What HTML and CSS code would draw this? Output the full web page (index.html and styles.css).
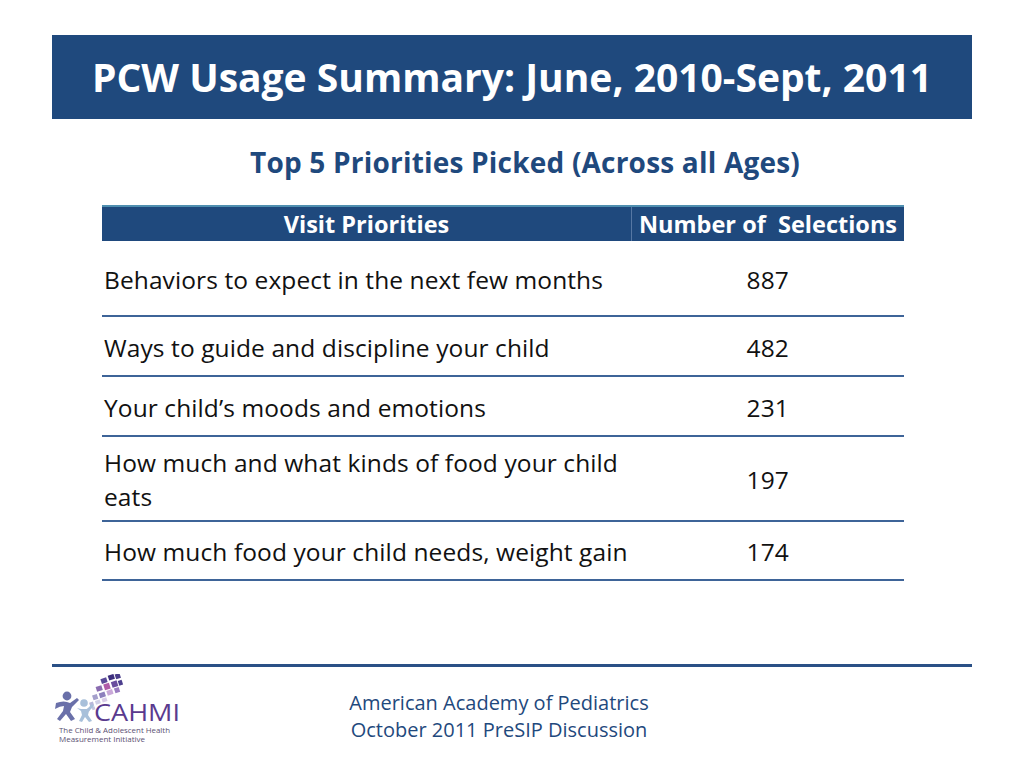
FILE: index.html
```html
<!DOCTYPE html>
<html>
<head>
<meta charset="utf-8">
<link rel="stylesheet" href="styles.css">
</head>
<body>
<div class="slide">
  <header class="title-bar">
    <h1 class="title">PCW Usage Summary: June, 2010-Sept, 2011</h1>
  </header>
  <h2 class="subtitle">Top 5 Priorities Picked (Across all Ages)</h2>
  <table class="data">
    <thead>
      <tr>
        <th class="c1">Visit Priorities</th>
        <th class="c2">Number of&nbsp; Selections</th>
      </tr>
    </thead>
    <tbody>
      <tr class="r1"><td class="c1">Behaviors to expect in the next few months</td><td class="c2">887</td></tr>
      <tr class="r2"><td class="c1">Ways to guide and discipline your child</td><td class="c2">482</td></tr>
      <tr class="r3"><td class="c1">Your child’s moods and emotions</td><td class="c2">231</td></tr>
      <tr class="r4"><td class="c1">How much and what kinds of food your child eats</td><td class="c2">197</td></tr>
      <tr class="r5"><td class="c1">How much food your child needs, weight gain</td><td class="c2">174</td></tr>
    </tbody>
  </table>
  <footer class="footer">
    <div class="logo">
      <svg width="132" height="72" viewBox="0 0 132 72">
        <g transform="rotate(-18 54 16)">
          <rect x="60" y="3" width="6" height="5" fill="#3d2f7e"/>
          <rect x="67" y="4" width="5" height="5" fill="#4a3d8a"/>
          <rect x="52" y="4" width="6" height="5" fill="#5a4a98"/>
          <rect x="45" y="10" width="6" height="5" fill="#8a6cb0"/>
          <rect x="53" y="10" width="6" height="6" fill="#b05ca8"/>
          <rect x="61" y="10" width="6" height="6" fill="#6a4e9e"/>
          <rect x="68" y="11" width="4" height="5" fill="#4d3f8e"/>
          <rect x="39" y="17" width="5" height="5" fill="#a5a0cc"/>
          <rect x="46" y="17" width="6" height="5" fill="#8d80bd"/>
          <rect x="54" y="17" width="6" height="5" fill="#c9a8d8"/>
          <rect x="62" y="17" width="5" height="5" fill="#9a7cc0"/>
          <rect x="34" y="23" width="4" height="4" fill="#b8b8da"/>
          <rect x="40" y="23" width="5" height="4" fill="#cfcfe6"/>
          <rect x="47" y="23" width="5" height="4" fill="#d9cde8"/>
          <rect x="29" y="28" width="3" height="3" fill="#a4a4cc"/>
          <rect x="35" y="28" width="3" height="3" fill="#c4c4e0"/>
          <rect x="24" y="31" width="3" height="3" fill="#9090c0"/>
        </g>
        <circle cx="15" cy="22" r="4.4" fill="#6a70a9"/>
        <path d="M4 29 Q12 26 18 29 L25 24 L27 26 L20 33 L18 38 L23 45 L19 47 L14 40 L8 47 L5 45 L11 37 L12 32 Q8 32 3 35 Z" fill="#6a70a9"/>
        <circle cx="32" cy="29" r="3.8" fill="#a8c0da"/>
        <path d="M25 34 L29 35 L35 35 L40 30 L42 32 L37 37 L36 41 L40 47 L37 48 L33 43 L30 48 L27 47 L30 41 L29 37 Z" fill="#a8c0da"/>
        <text x="42" y="47" textLength="86" lengthAdjust="spacingAndGlyphs" font-family="'Open Sans', sans-serif" font-size="24" fill="#5a3a8e">CAHMI</text>
        <text x="7" y="59" textLength="111" lengthAdjust="spacingAndGlyphs" font-family="'Open Sans', sans-serif" font-size="8" fill="#5b4f72">The Child &amp; Adolescent Health</text>
        <text x="7" y="68" textLength="86" lengthAdjust="spacingAndGlyphs" font-family="'Open Sans', sans-serif" font-size="8" fill="#5b4f72">Measurement Initiative</text>
      </svg>
    </div>
    <div class="footer-text">
      <div>American Academy of Pediatrics</div>
      <div>October 2011 PreSIP Discussion</div>
    </div>
  </footer>
</div>
</body>
</html>
```

FILE: styles.css
```css
html, body {
  margin: 0;
  padding: 0;
  background: #ffffff;
}

.slide {
  width: 1024px;
  height: 768px;
  position: relative;
  overflow: hidden;
  font-family: "Open Sans", "Liberation Sans", sans-serif;
  padding-top: 35px;
  box-sizing: border-box;
}

.title-bar {
  margin: 0 52px;
  height: 84px;
  background: #1f497d;
  display: flex;
  align-items: center;
  justify-content: center;
}

.title {
  margin: 0;
  color: #ffffff;
  font-size: 39px;
  font-weight: 700;
  letter-spacing: 0;
  line-height: 48px;
}

.subtitle {
  margin: 25px 0 0 0;
  padding-left: 26px;
  text-align: center;
  color: #1f497d;
  font-size: 28px;
  font-weight: 700;
  letter-spacing: 0.2px;
  line-height: 36px;
}

.data {
  margin: 25px 0 0 102px;
  width: 802px;
  border-collapse: collapse;
  table-layout: fixed;
}

.data th {
  background: #1f497d;
  color: #ffffff;
  font-size: 23.5px;
  font-weight: 700;
  letter-spacing: 0;
  height: 34px;
  line-height: 34px;
  padding: 0;
  border-top: 2px solid #4f8fb0;
  vertical-align: middle;
}

.data th.c1 {
  width: 529px;
  border-right: 1px solid #5677a3;
}

.data th.c2 {
  white-space: nowrap;
}

.data td {
  font-size: 24.5px;
  letter-spacing: 0.1px;
  color: #111111;
  padding: 4px 0 0 2px;
  border-bottom: 2px solid #3e6498;
  line-height: 34px;
  vertical-align: middle;
}

.data td.c2 {
  text-align: center;
  padding-left: 0;
}

.data tr.r1 td { vertical-align: top; padding-top: 22px; height: 52px; }
.data tr.r2 td { height: 54px; }
.data tr.r3 td { height: 54px; }
.data tr.r4 td { padding-top: 3px; height: 80px; }
.data tr.r5 td { padding-top: 3px; height: 54px; }

.footer {
  position: absolute;
  left: 52px;
  top: 664px;
  width: 920px;
  border-top: 3px solid #2a5086;
  display: flex;
}

.logo {
  margin: 7px 0 0 0;
  width: 132px;
  height: 72px;
}

.footer-text {
  width: 320px;
  margin-left: 155px;
  padding-top: 22px;
  color: #1f497d;
  font-size: 20px;
  line-height: 27px;
  text-align: center;
}
```
